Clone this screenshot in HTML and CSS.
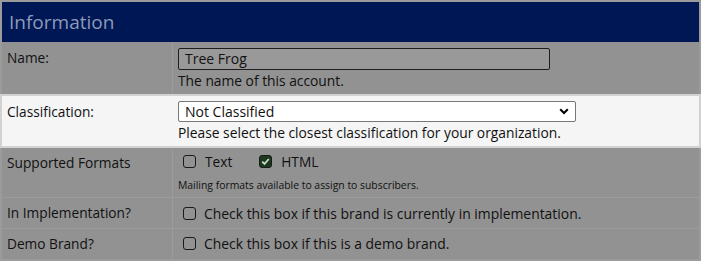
FILE: index.html
```html
<!DOCTYPE html>
<html>
<head>
<meta charset="utf-8">
<link rel="stylesheet" href="styles.css">
</head>
<body>
<div class="panel">
  <div class="header">Information</div>
  <div class="row row-name">
    <div class="label">Name:</div>
    <div class="value">
      <div class="textbox">Tree Frog</div>
      <div class="help">The name of this account.</div>
    </div>
  </div>
  <div class="row row-class">
    <div class="label">Classification:</div>
    <div class="value">
      <div class="select"><span>Not Classified</span>
        <svg class="chev" width="10" height="7" viewBox="0 0 10 7"><path d="M1.2 1.3 L5 5 L8.8 1.3" fill="none" stroke="#000" stroke-width="2"/></svg>
      </div>
      <div class="help">Please select the closest classification for your organization.</div>
    </div>
  </div>
  <div class="row row-formats">
    <div class="label">Supported Formats</div>
    <div class="value">
      <div class="checks">
        <span class="opt"><span class="cb"></span>Text</span>
        <span class="opt"><span class="cb checked"><svg width="11" height="11" viewBox="0 0 11 11"><path d="M2.2 5.6 L4.5 7.9 L8.8 3" fill="none" stroke="#cfd8cf" stroke-width="1.7"/></svg></span>HTML</span>
      </div>
      <div class="small">Mailing formats available to assign to subscribers.</div>
    </div>
  </div>
  <div class="row row-simple">
    <div class="label">In Implementation?</div>
    <div class="value"><span class="opt"><span class="cb"></span>Check this box if this brand is currently in implementation.</span></div>
  </div>
  <div class="row row-simple last">
    <div class="label">Demo Brand?</div>
    <div class="value"><span class="opt"><span class="cb"></span>Check this box if this is a demo brand.</span></div>
  </div>
</div>
</body>
</html>
```
FILE: styles.css
```css
html, body {
  margin: 0;
  padding: 0;
  background: #929292;
}
body {
  font-family: "Open Sans", "Liberation Sans", sans-serif;
  font-size: 13.7px;
  color: #111;
}
.panel {
  width: 697px;
  height: 257px;
  border: 2px solid #9b9b9b;
  background: #929292;
}
.header {
  height: 40px;
  background: #001756;
  color: #8c9bb6;
  font-size: 19px;
  line-height: 40px;
  padding-left: 7px;
}
.row {
  display: grid;
  grid-template-columns: 171px 1fr;
  border-bottom: 1px solid #9c9c9c;
  background: #929292;
}
.label {
  padding: 6px 5px 0 5px;
  border-right: 1px solid #9c9c9c;
}
.value {
  padding: 0 5px;
}
.row-name {
  height: 52px;
}
.row-name .value {
  padding-top: 6px;
}
.textbox {
  width: 364px;
  height: 20px;
  border: 1px solid #1e1e1e;
  border-radius: 2px;
  background: #999;
  line-height: 20px;
  padding-left: 6px;
  font-size: 14px;
}
.help {
  margin-top: 2px;
  line-height: 18px;
  font-size: 13.8px;
}
.row-class {
  height: 50px;
  background: #f5f5f5;
  box-shadow: 0 0 0 2px #d2d2d2;
  border-bottom: none;
  position: relative;
  margin-top: 1px;
  margin-bottom: 2px;
}
.row-class .label {
  border-right-color: #f5f5f5;
}
.row-class .value {
  padding-top: 5px;
}
.select {
  width: 384px;
  height: 19px;
  border: 1px solid #777;
  border-radius: 2px;
  background: #fff;
  display: flex;
  align-items: center;
  justify-content: space-between;
  padding: 0 6px 0 6px;
  font-size: 14px;
}
.chev {
  display: block;
}
.row-formats {
  height: 49px;
}
.row-formats .label {
  padding-top: 5px;
}
.checks {
  display: flex;
  gap: 27px;
  padding-top: 3px;
  padding-left: 5px;
  height: 20px;
  align-items: center;
}
.opt {
  display: inline-flex;
  align-items: center;
}
.cb {
  width: 11px;
  height: 11px;
  border: 1px solid #1a1a1a;
  border-radius: 3px;
  margin-right: 9px;
  display: inline-flex;
  align-items: center;
  justify-content: center;
  box-sizing: content-box;
}
.cb.checked {
  background: #1b3a1d;
}
.small {
  font-size: 10.4px;
  margin-top: 7px;
}
.row-simple {
  height: 30px;
  align-items: stretch;
}
.row-simple .label {
  padding-top: 5px;
}
.row-simple .value {
  padding-left: 10px;
  display: flex;
  align-items: center;
  font-size: 13.9px;
}
.row-simple .cb {
  margin-right: 8px;
}
.row-simple.last {
  height: 29px;
  border-bottom: none;
}
```
